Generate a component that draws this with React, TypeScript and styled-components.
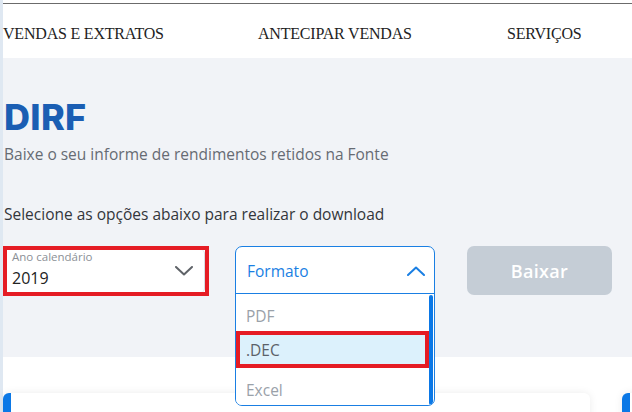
import React from 'react';
import styled, { createGlobalStyle } from 'styled-components';

const GlobalStyle = createGlobalStyle`
  html, body {
    margin: 0;
    padding: 0;
    background: #ffffff;
    overflow: hidden;
  }
  * { box-sizing: border-box; }
`;

const Page = styled.div`
  display: flex;
  width: 632px;
  height: 412px;
  overflow: hidden;
  font-family: 'Open Sans', 'Noto Sans', sans-serif;
`;

const SideStrip = styled.div`
  width: 3px;
  flex: none;
  background: #dfe8f2;
`;

const Main = styled.div`
  flex: 1;
  display: flex;
  flex-direction: column;
  min-width: 0;
`;

const Header = styled.header`
  flex: none;
  margin-top: 3px;
  border-top: 1px solid #6b6b6b;
  height: 55px;
  display: grid;
  grid-template-columns: 255px 249px auto;
  align-items: center;
  background: #fff;
  padding-top: 6px;
`;

const NavItem = styled.a`
  font-family: 'Liberation Serif', 'Times New Roman', serif;
  font-size: 16px;
  color: #222;
  text-decoration: none;
  white-space: nowrap;
  letter-spacing: -0.2px;
`;

const Hero = styled.section`
  flex: none;
  background: #f1f3f7;
  height: 299px;
  padding: 39px 0 0 1px;
`;

const Title = styled.h1`
  margin: 0;
  font-family: Inter, 'Open Sans', sans-serif;
  font-weight: 800;
  font-size: 36px;
  line-height: 40px;
  color: #1b5eb3;
  letter-spacing: 0.3px;
`;

const Subtitle = styled.p`
  margin: 7px 0 0;
  font-size: 15.5px;
  line-height: 20px;
  color: #666b73;
`;

const Instructions = styled.p`
  margin: 40px 0 0;
  font-size: 15.5px;
  line-height: 20px;
  color: #33363b;
`;

const FieldsRow = styled.div`
  margin-top: 22px;
  display: flex;
  align-items: flex-start;
  margin-left: -1px;
`;

const Highlight = styled.div`
  border: 4px solid #e51c24;
  background: #fff;
`;

const YearField = styled.div`
  width: 198px;
  height: 42px;
  background: #fff;
  border-right: 1px solid #d8dce2;
  border-radius: 0 4px 4px 0;
  display: flex;
  align-items: center;
  justify-content: space-between;
  padding: 0 11px 0 5px;
`;

const YearText = styled.div`
  display: flex;
  flex-direction: column;
  align-self: flex-start;
  padding-top: 0px;
`;

const SmallLabel = styled.span`
  font-size: 11.5px;
  line-height: 14px;
  color: #8b9096;
`;

const YearValue = styled.span`
  font-size: 16px;
  line-height: 21px;
  color: #222;
  margin-top: 4px;
`;

const ComboSlot = styled.div`
  position: relative;
  width: 200px;
  height: 48px;
  margin-left: 26px;
`;

const ComboBox = styled.div`
  position: absolute;
  top: 0;
  left: 0;
  width: 200px;
  border: 1px solid #1a7fe3;
  border-radius: 7px;
  background: #fff;
  z-index: 5;
  overflow: hidden;
`;

const ComboHead = styled.div`
  height: 47px;
  display: flex;
  align-items: center;
  justify-content: space-between;
  padding: 2px 9px 0 11px;
  border-bottom: 1px solid #1a7fe3;
  font-size: 15.5px;
  color: #1a7fe3;
`;

const OptionList = styled.div`
  position: relative;
  padding-right: 5px;
`;

const Option = styled.div<{ $active?: boolean }>`
  height: 37px;
  display: flex;
  align-items: center;
  padding: ${p => (p.$active ? '0 0 0 6px' : '7px 0 0 10px')};
  font-size: 15.5px;
  color: ${p => (p.$active ? '#5b6169' : '#9aa1a9')};
  background: ${p => (p.$active ? '#dcf1fc' : '#fff')};
  border: ${p => (p.$active ? '4px solid #e51c24' : 'none')};
`;

const ScrollThumb = styled.div`
  position: absolute;
  top: 1px;
  right: 1px;
  width: 4px;
  height: 110px;
  border-radius: 2px;
  background: #0b78e6;
`;

const DownloadButton = styled.button`
  margin-left: 32px;
  width: 145px;
  height: 49px;
  border: none;
  border-radius: 7px;
  background: #c5cdd6;
  color: #fff;
  font-family: 'Open Sans', sans-serif;
  font-size: 18px;
  font-weight: 600;
  letter-spacing: 0.3px;
`;

const Lower = styled.section`
  flex: 1;
  background: #fff;
  display: flex;
  gap: 32px;
  padding-top: 36px;
`;

const Card = styled.div<{ $width: number }>`
  width: ${p => p.$width}px;
  flex: none;
  height: 40px;
  background: #fff;
  border-left: 8px solid #0b78e6;
  border-radius: 6px 6px 0 0;
  box-shadow: 0 0 8px rgba(0, 0, 0, 0.08);
`;

const Chevron = ({ up, color }: { up?: boolean; color: string }) => (
  <svg width="18" height="10" viewBox="0 0 18 10" fill="none">
    <path
      d={up ? 'M1 9 L9 1.5 L17 9' : 'M1 1 L9 8.5 L17 1'}
      stroke={color}
      strokeWidth="2"
      strokeLinecap="round"
      strokeLinejoin="round"
    />
  </svg>
);

export default function App() {
  return (
    <>
      <GlobalStyle />
      <Page>
        <SideStrip />
        <Main>
          <Header>
            <NavItem>VENDAS E EXTRATOS</NavItem>
            <NavItem>ANTECIPAR VENDAS</NavItem>
            <NavItem>SERVIÇOS</NavItem>
          </Header>

          <Hero>
            <Title>DIRF</Title>
            <Subtitle>Baixe o seu informe de rendimentos retidos na Fonte</Subtitle>
            <Instructions>Selecione as opções abaixo para realizar o download</Instructions>

            <FieldsRow>
              <Highlight>
                <YearField>
                  <YearText>
                    <SmallLabel>Ano calendário</SmallLabel>
                    <YearValue>2019</YearValue>
                  </YearText>
                  <Chevron color="#5f6368" />
                </YearField>
              </Highlight>

              <ComboSlot>
                <ComboBox>
                  <ComboHead>
                    <span>Formato</span>
                    <Chevron up color="#1a7fe3" />
                  </ComboHead>
                  <OptionList>
                    <Option>PDF</Option>
                    <Option $active>.DEC</Option>
                    <Option>Excel</Option>
                    <ScrollThumb />
                  </OptionList>
                </ComboBox>
              </ComboSlot>

              <DownloadButton>Baixar</DownloadButton>
            </FieldsRow>
          </Hero>

          <Lower>
            <Card $width={587} />
            <Card $width={60} />
          </Lower>
        </Main>
      </Page>
    </>
  );
}
